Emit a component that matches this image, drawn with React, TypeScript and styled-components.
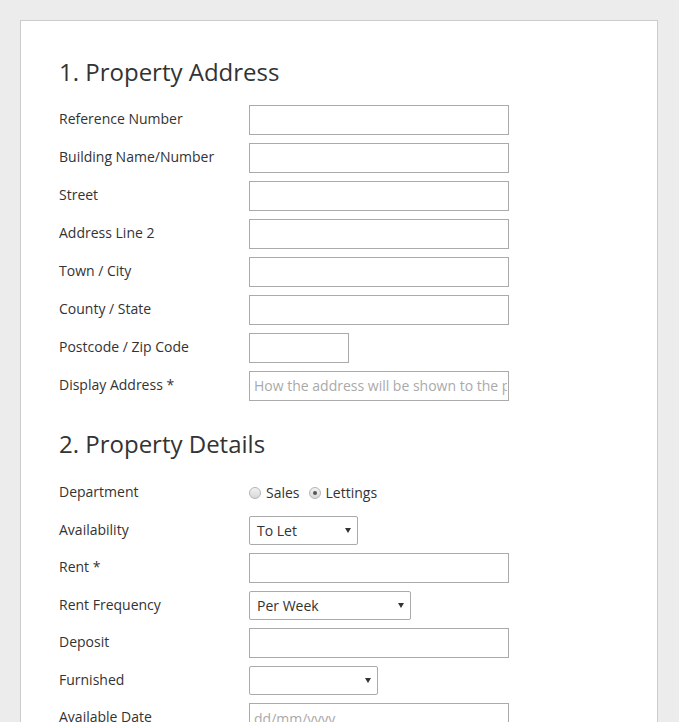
import React from "react";
import styled, { createGlobalStyle } from "styled-components";

const GlobalStyle = createGlobalStyle`
  html, body { margin: 0; padding: 0; }
  body {
    background: #ececec;
    font-family: "Open Sans", "Liberation Sans", Arial, sans-serif;
    color: #333;
  }
  * { box-sizing: border-box; }
`;

const Page = styled.div`
  padding: 20px 0 0 20px;
`;

const Panel = styled.div`
  width: 638px;
  min-height: 760px;
  background: #fff;
  border: 1px solid #cccccc;
  padding: 34px 38px 40px 38px;
`;

const Heading = styled.h2<{ $first?: boolean }>`
  margin: ${(p) => (p.$first ? "0 0 16px 0" : "26px 0 18px 0")};
  font-size: 24px;
  font-weight: 400;
  line-height: 1.4;
  color: #333;
`;

const Rows = styled.div`
  display: flex;
  flex-direction: column;
  gap: 8px;
`;

const Row = styled.div<{ $h?: number }>`
  display: grid;
  grid-template-columns: 190px 1fr;
  align-items: center;
  min-height: ${(p) => p.$h ?? 29}px;
`;

const Label = styled.label`
  font-size: 14px;
  line-height: 20px;
  padding-bottom: 2px;
  color: #333;
`;

const TextInput = styled.input<{ $w?: number }>`
  width: ${(p) => p.$w ?? 260}px;
  height: 30px;
  border: 1px solid #aaaaaa;
  border-radius: 0;
  padding: 0 1px 0 4px;
  font-family: "Open Sans", "Liberation Sans", Arial, sans-serif;
  font-size: 14px;
  color: #333;
  background: #fff;
  outline: none;
  &::placeholder { color: #aaaaaa; }
`;

const SelectBox = styled.div<{ $w: number }>`
  width: ${(p) => p.$w}px;
  height: 29px;
  border: 1px solid #aaaaaa;
  border-radius: 2px;
  background: #fff;
  display: flex;
  align-items: center;
  justify-content: space-between;
  padding: 0 6px 0 7px;
  font-size: 14px;
  color: #333;
`;

const Arrow = styled.svg`
  width: 6px;
  height: 5px;
  flex: none;
`;

const RadioGroup = styled.div`
  display: flex;
  align-items: center;
  gap: 9px;
  font-size: 14px;
  padding-bottom: 1px;
`;

const RadioOption = styled.span`
  display: inline-flex;
  align-items: center;
  gap: 5px;
`;

const RadioCircle = styled.span<{ $checked?: boolean }>`
  width: 12px;
  height: 12px;
  border-radius: 50%;
  border: 1px solid #b4b4b4;
  background: linear-gradient(#f2f2f2, #d8d8d8);
  display: inline-flex;
  align-items: center;
  justify-content: center;
  &::after {
    content: "";
    display: ${(p) => (p.$checked ? "block" : "none")};
    width: 4px;
    height: 4px;
    border-radius: 50%;
    background: #555;
  }
`;

const Select = ({ w, value }: { w: number; value?: string }) => (
  <SelectBox $w={w}>
    <span>{value ?? ""}</span>
    <Arrow viewBox="0 0 6 5">
      <path d="M0 0 L6 0 L3 5 Z" fill="#333" />
    </Arrow>
  </SelectBox>
);

export default function App() {
  return (
    <>
      <GlobalStyle />
      <Page>
        <Panel>
          <Heading $first>1. Property Address</Heading>
          <Rows>
            <Row><Label>Reference Number</Label><TextInput /></Row>
            <Row><Label>Building Name/Number</Label><TextInput /></Row>
            <Row><Label>Street</Label><TextInput /></Row>
            <Row><Label>Address Line 2</Label><TextInput /></Row>
            <Row><Label>Town / City</Label><TextInput /></Row>
            <Row><Label>County / State</Label><TextInput /></Row>
            <Row><Label>Postcode / Zip Code</Label><TextInput $w={100} /></Row>
            <Row>
              <Label>Display Address *</Label>
              <TextInput placeholder="How the address will be shown to the public" />
            </Row>
          </Rows>
          <Heading>2. Property Details</Heading>
          <Rows>
            <Row $h={30}>
              <Label>Department</Label>
              <RadioGroup>
                <RadioOption><RadioCircle />Sales</RadioOption>
                <RadioOption><RadioCircle $checked />Lettings</RadioOption>
              </RadioGroup>
            </Row>
            <Row><Label>Availability</Label><Select w={109} value="To Let" /></Row>
            <Row><Label>Rent *</Label><TextInput /></Row>
            <Row><Label>Rent Frequency</Label><Select w={162} value="Per Week" /></Row>
            <Row><Label>Deposit</Label><TextInput /></Row>
            <Row><Label>Furnished</Label><Select w={129} /></Row>
            <Row><Label>Available Date</Label><TextInput placeholder="dd/mm/yyyy" /></Row>
          </Rows>
        </Panel>
      </Page>
    </>
  );
}
